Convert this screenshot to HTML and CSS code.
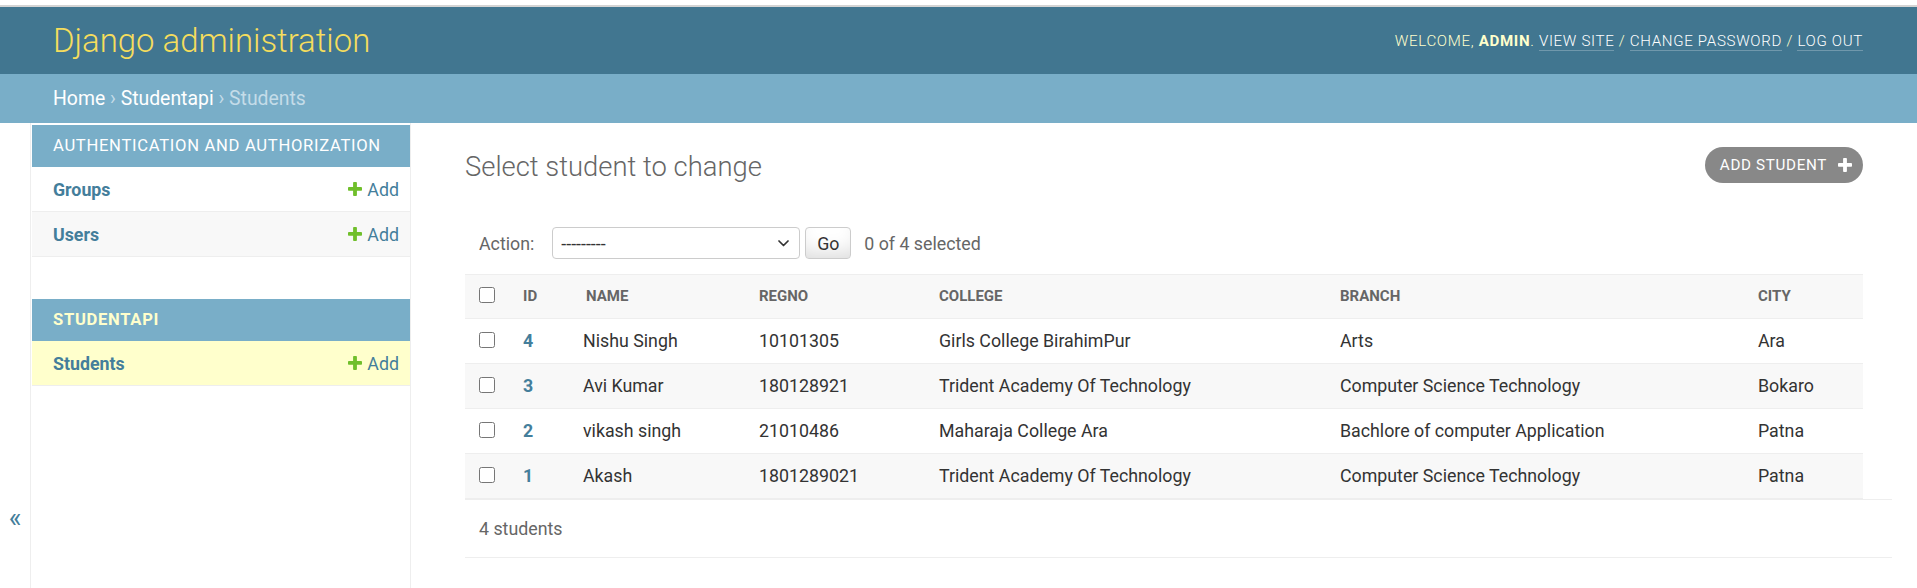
FILE: index.html
```html
<!DOCTYPE html>
<html lang="en">
<head>
<meta charset="utf-8">
<title>Select student to change | Django site admin</title>
<link rel="stylesheet" href="styles.css">
</head>
<body>
<div class="topline"></div>
<header class="header">
  <h1 class="site-name">Django administration</h1>
  <div class="user-tools">Welcome, <strong>admin</strong>. <a href="#">View site</a> / <a href="#">Change password</a> / <a href="#">Log out</a></div>
</header>
<nav class="breadcrumbs"><a href="#">Home</a> › <a href="#">Studentapi</a> › Students</nav>
<div class="main">
  <button class="toggle" type="button">«</button>
  <nav class="sidebar">
    <div class="module">
      <div class="caption">Authentication and Authorization</div>
      <div class="model-row"><a class="model-name" href="#">Groups</a><a class="addlink" href="#"><svg class="icon-plus" viewBox="192 192 1408 1408"><path fill="#70bf2b" d="M1600 796v192q0 40-28 68t-68 28h-416v416q0 40-28 68t-68 28h-192q-40 0-68-28t-28-68v-416h-416q-40 0-68-28t-28-68v-192q0-40 28-68t68-28h416v-416q0-40 28-68t68-28h192q40 0 68 28t28 68v416h416q40 0 68 28t28 68z"/></svg>Add</a></div>
      <div class="model-row alt"><a class="model-name" href="#">Users</a><a class="addlink" href="#"><svg class="icon-plus" viewBox="192 192 1408 1408"><path fill="#70bf2b" d="M1600 796v192q0 40-28 68t-68 28h-416v416q0 40-28 68t-68 28h-192q-40 0-68-28t-28-68v-416h-416q-40 0-68-28t-28-68v-192q0-40 28-68t68-28h416v-416q0-40 28-68t68-28h192q40 0 68 28t28 68v416h416q40 0 68 28t28 68z"/></svg>Add</a></div>
    </div>
    <div class="module current-app">
      <div class="caption">Studentapi</div>
      <div class="model-row current"><a class="model-name" href="#">Students</a><a class="addlink" href="#"><svg class="icon-plus" viewBox="192 192 1408 1408"><path fill="#70bf2b" d="M1600 796v192q0 40-28 68t-68 28h-416v416q0 40-28 68t-68 28h-192q-40 0-68-28t-28-68v-416h-416q-40 0-68-28t-28-68v-192q0-40 28-68t68-28h416v-416q0-40 28-68t68-28h192q40 0 68 28t28 68v416h416q40 0 68 28t28 68z"/></svg>Add</a></div>
    </div>
  </nav>
  <div class="content">
    <div class="page-head">
      <h1 class="page-title">Select student to change</h1>
      <a class="add-btn" href="#">Add student<svg class="icon-plus" viewBox="192 192 1408 1408"><path fill="#fff" d="M1600 796v192q0 40-28 68t-68 28h-416v416q0 40-28 68t-68 28h-192q-40 0-68-28t-28-68v-416h-416q-40 0-68-28t-28-68v-192q0-40 28-68t68-28h416v-416q0-40 28-68t68-28h192q40 0 68 28t28 68v416h416q40 0 68 28t28 68z"/></svg></a>
    </div>
    <div class="actions">
      <label class="action-label">Action:</label>
      <span class="select-wrap">
        <select class="action-select"><option>---------</option></select>
        <svg class="chevron" viewBox="0 0 11 7"><path d="M1 1l4.5 4.5L10 1" fill="none" stroke="#333" stroke-width="1.7" stroke-linecap="round" stroke-linejoin="round"/></svg>
      </span>
      <button class="go-btn" type="button">Go</button>
      <span class="counter">0 of 4 selected</span>
    </div>
    <table class="results">
      <colgroup>
        <col class="c-check"><col class="c-id"><col class="c-name"><col class="c-regno"><col class="c-college"><col class="c-branch"><col class="c-city">
      </colgroup>
      <thead>
        <tr><th class="check"><input type="checkbox"></th><th>Id</th><th>Name</th><th>Regno</th><th>College</th><th>Branch</th><th>City</th></tr>
      </thead>
      <tbody>
        <tr><td class="check"><input type="checkbox"></td><th><a href="#">4</a></th><td class="name">Nishu Singh</td><td>10101305</td><td>Girls College BirahimPur</td><td>Arts</td><td>Ara</td></tr>
        <tr><td class="check"><input type="checkbox"></td><th><a href="#">3</a></th><td class="name">Avi Kumar</td><td>180128921</td><td>Trident Academy Of Technology</td><td>Computer Science Technology</td><td>Bokaro</td></tr>
        <tr><td class="check"><input type="checkbox"></td><th><a href="#">2</a></th><td class="name">vikash singh</td><td>21010486</td><td>Maharaja College Ara</td><td>Bachlore of computer Application</td><td>Patna</td></tr>
        <tr><td class="check"><input type="checkbox"></td><th><a href="#">1</a></th><td class="name">Akash</td><td>1801289021</td><td>Trident Academy Of Technology</td><td>Computer Science Technology</td><td>Patna</td></tr>
      </tbody>
    </table>
    <p class="paginator">4 students</p>
  </div>
</div>
</body>
</html>
```
FILE: styles.css
```css
* { box-sizing: border-box; }
html, body { margin: 0; padding: 0; }
body {
  font-family: Roboto, "Noto Sans", "Liberation Sans", sans-serif;
  font-size: 17.8px;
  color: #333;
  background: #fff;
  overflow: hidden;
}
a { text-decoration: none; color: #447e9b; }

.topline { height: 7px; background: #fff; border-bottom: 2px solid #d4d4d4; }

.header {
  display: flex;
  justify-content: space-between;
  align-items: center;
  height: 67px;
  padding: 0 54px 0 53px;
  background: #417690;
}
.site-name { margin: 0; font-size: 32.9px; font-weight: 300; line-height: 41px; color: #f5dd5d; }
.user-tools {
  font-size: 15.1px;
  font-weight: 300;
  letter-spacing: 0.67px;
  text-transform: uppercase;
  color: #ffc;
}
.user-tools strong { font-weight: 700; }
.user-tools a { color: #fff; border-bottom: 1px solid rgba(255, 255, 255, 0.25); }

.breadcrumbs {
  height: 49px;
  padding: 0 53px;
  background: #79aec8;
  color: #c4dce8;
  font-size: 19.4px;
  line-height: 49px;
}
.breadcrumbs a { color: #fff; }

.main { display: flex; min-height: 790px; }

.toggle {
  flex: 0 0 31px;
  display: flex;
  align-items: center;
  justify-content: center;
  padding: 0;
  border: 0;
  border-right: 1px solid #eee;
  background: #fff;
  color: #447e9b;
  font-family: inherit;
  font-size: 27px;
}

.sidebar { flex: 0 0 380px; padding: 2px 0 0 1px; border-right: 1px solid #eee; }
.module { margin-bottom: 42px; }
.caption {
  height: 42px;
  line-height: 42px;
  padding-left: 21px;
  background: #79aec8;
  color: #fff;
  font-size: 16.6px;
  text-transform: uppercase;
  letter-spacing: 0.7px;
}
.current-app .caption { color: #ffc; font-weight: 700; }
.model-row {
  display: flex;
  justify-content: space-between;
  align-items: center;
  height: 45px;
  padding: 0 11px 0 21px;
  border-bottom: 1px solid #eee;
}
.model-row.alt { background: #f8f8f8; }
.model-row.current { background: #ffc; }
.model-name { font-weight: 700; }
.addlink { display: inline-flex; align-items: center; gap: 5px; }
.icon-plus { width: 14px; height: 14px; flex: 0 0 14px; }

.content { flex: 1; min-width: 0; padding: 24px 54px 0 54px; }
.page-head { display: flex; justify-content: space-between; align-items: flex-start; }
.page-title { margin: 5px 0 0; font-size: 27.4px; font-weight: 300; line-height: 31px; color: #666; }
.add-btn {
  display: inline-flex;
  align-items: center;
  gap: 11px;
  height: 36px;
  padding: 0 11px 0 15px;
  border-radius: 18px;
  background: #888;
  color: #fff;
  font-size: 15.2px;
  letter-spacing: 0.67px;
  text-transform: uppercase;
}

.actions {
  display: flex;
  align-items: center;
  height: 32px;
  margin: 44px 0 15px;
  padding-left: 14px;
  color: #666;
}
.action-label { margin-right: 18px; }
.select-wrap { display: inline-grid; align-items: center; }
.select-wrap > * { grid-area: 1 / 1; }
.action-select {
  width: 248px;
  height: 32px;
  padding: 0 8px;
  border: 1px solid #ccc;
  border-radius: 4px;
  background: #fff;
  font-family: inherit;
  font-size: 17.8px;
  color: #333;
  appearance: none;
  -webkit-appearance: none;
}
.chevron { justify-self: end; width: 11px; height: 7px; margin-right: 11px; pointer-events: none; }
.go-btn {
  width: 46px;
  height: 32px;
  margin-left: 5px;
  padding: 0;
  border: 1px solid #ccc;
  border-radius: 4px;
  background: #fff;
  box-shadow: inset 0 -15px 20px -10px rgba(0, 0, 0, 0.15);
  font-family: inherit;
  font-size: 17.8px;
  color: #333;
}
.counter { margin-left: 13px; color: #666; }

.results { width: 100%; table-layout: fixed; border-collapse: separate; border-spacing: 0; }
.c-check { width: 45px; }
.c-id { width: 63px; }
.c-name { width: 173px; }
.c-regno { width: 180px; }
.c-college { width: 401px; }
.c-branch { width: 418px; }
.c-city { width: 118px; }
.results th, .results td { padding: 0 13px; text-align: left; white-space: nowrap; font-weight: 400; }
.results thead th {
  line-height: 43px;
  background: #f8f8f8;
  border-top: 1px solid #eee;
  border-bottom: 1px solid #eee;
  font-size: 15px;
  font-weight: 700;
  color: #666;
  text-transform: uppercase;
}
.results tbody th, .results tbody td { line-height: 44px; border-bottom: 1px solid #eee; }
.results tbody th { font-weight: 700; }
.results tbody td.name { padding-left: 10px; }
.results tbody tr:nth-child(even) { background: #f8f8f8; }
.results .check { padding-left: 14px; }
.results input { width: 16px; height: 16px; margin: 0 0 4px; vertical-align: middle; }

.paginator {
  margin: 0 -29px 0 0;
  padding: 14px;
  line-height: 29px;
  border-top: 1px solid #eee;
  border-bottom: 1px solid #eee;
  color: #666;
}
```
